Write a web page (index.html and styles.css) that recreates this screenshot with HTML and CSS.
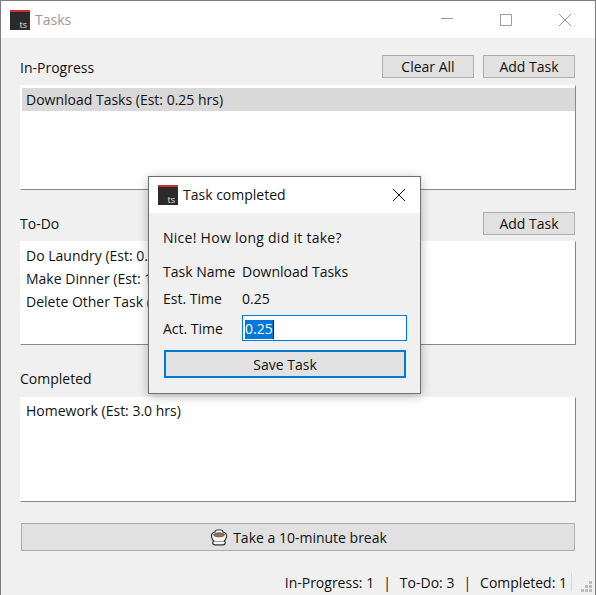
FILE: index.html
```html
<!DOCTYPE html>
<html>
<head>
    <title>Tasks</title>
    <link rel="stylesheet" href="styles.css">
</head>
<body>
    <div class="window">
        <div class="titlebar">
            <div class="app-icon"><span>ts</span></div>
            <div class="window-title">Tasks</div>
            <div class="caption">
                <svg width="14" height="14" viewBox="0 0 14 14"><path d="M1 5.5H13" stroke="#9a9a9a" fill="none"/></svg>
                <svg width="14" height="14" viewBox="0 0 14 14"><path d="M1.5 1.5H12.5V12.5H1.5Z" stroke="#9a9a9a" fill="none"/></svg>
                <svg width="14" height="14" viewBox="0 0 14 14"><path d="M1 1L13 13M13 1L1 13" stroke="#9a9a9a" fill="none"/></svg>
            </div>
        </div>

        <div class="content">
            <div class="section-head head-progress">
                <span class="section-label">In-Progress</span>
                <button class="btn">Clear All</button>
                <button class="btn">Add Task</button>
            </div>
            <div class="list list-progress">
                <div class="row row-selected">Download Tasks (Est: 0.25 hrs)</div>
            </div>

            <div class="section-head head-todo">
                <span class="section-label">To-Do</span>
                <button class="btn">Add Task</button>
            </div>
            <div class="list list-todo">
                <div class="row">Do Laundry (Est: 0.5 hrs)</div>
                <div class="row">Make Dinner (Est: 1.0 hrs)</div>
                <div class="row">Delete Other Task (Est: 0.1 hrs)</div>
            </div>

            <div class="section-head head-done">
                <span class="section-label">Completed</span>
            </div>
            <div class="list list-done">
                <div class="row">Homework (Est: 3.0 hrs)</div>
            </div>

            <button class="break-btn">
                <svg width="20" height="18" viewBox="0 0 20 18">
                    <path d="M6 4C6 1 14 1 14 4C16 4.5 18 6 17.5 9C17 11.5 16 12.5 15 13.2C17.5 14 16.5 16.8 14 16.8H6C3.5 16.8 2.5 14 5 13.2C4 12.5 3 11.5 2.5 9C2 6 4 4.5 6 4Z" fill="#f6f6f4" stroke="#333" stroke-width="1.2"/>
                    <path d="M7.5 2.8C9 2 11 2 12.5 2.8" stroke="#aaa" fill="none"/>
                    <ellipse cx="10" cy="6.8" rx="5.5" ry="2" fill="#8f6f58" stroke="#5a4a40" stroke-width="0.7"/>
                    <path d="M5 13.5H15" stroke="#999"/>
                </svg>
                <span>Take a 10-minute break</span>
            </button>
        </div>

        <div class="statusbar">
            <span>In-Progress: 1</span><span class="pipe">|</span><span>To-Do: 3</span><span class="pipe">|</span><span>Completed: 1</span>
            <div class="status-sep"></div>
            <svg class="grip" width="12" height="12" viewBox="0 0 12 12" fill="#bdbdbd">
                <rect x="8" y="0" width="3" height="3"/>
                <rect x="4" y="4" width="3" height="3"/><rect x="8" y="4" width="3" height="3"/>
                <rect x="0" y="8" width="3" height="3"/><rect x="4" y="8" width="3" height="3"/><rect x="8" y="8" width="3" height="3"/>
            </svg>
        </div>
    </div>

    <!-- modal sits on top of the main window -->
    <div class="dialog">
        <div class="dialog-titlebar">
            <div class="app-icon"><span>ts</span></div>
            <div class="dialog-title">Task completed</div>
            <svg class="dialog-close" width="14" height="14" viewBox="0 0 14 14"><path d="M1 1L13 13M13 1L1 13" stroke="#111" fill="none"/></svg>
        </div>
        <div class="dialog-body">
            <div class="prompt">Nice! How long did it take?</div>
            <div class="field field-name"><span class="field-label">Task Name</span><span>Download Tasks</span></div>
            <div class="field field-est"><span class="field-label">Est. Time</span><span>0.25</span></div>
            <div class="field field-act">
                <span class="field-label">Act. Time</span>
                <div class="time-input"><span class="selected-text">0.25</span></div>
            </div>
            <button class="save-btn">Save Task</button>
        </div>
    </div>
</body>
</html>
```

FILE: styles.css
```css
* {
    box-sizing: border-box;
}

html, body {
    margin: 0;
    height: 100%;
    overflow: hidden;
}

body {
    font-family: "Open Sans", "Noto Sans", sans-serif;
    font-size: 14px;
    color: #111;
    background-color: #f0f0f0;
}

button {
    font: inherit;
    color: inherit;
    padding: 0;
}

.window {
    width: 596px;
    height: 595px;
    border: 1px solid #7c7c7c;
    border-bottom: none;
    display: flex;
    flex-direction: column;
}

.titlebar {
    height: 37px;
    flex: none;
    background-color: #fff;
    display: flex;
    align-items: center;
    padding-left: 9px;
}

.app-icon {
    width: 20px;
    height: 20px;
    flex: none;
    background-color: #2b2b2b;
    border-top: 2px solid #c8322b;
    display: flex;
    align-items: flex-end;
    justify-content: flex-end;
    padding-right: 3px;
}

.app-icon span {
    font-size: 9px;
    line-height: 10px;
    color: #e6e6e6;
}

.window-title {
    margin-left: 5px;
    color: #9b9b9b;
    font-size: 14px;
}

.caption {
    margin-left: auto;
    display: flex;
    gap: 45px;
    padding-right: 23px;
}

.content {
    flex: 1;
    padding: 0 19px;
    display: flex;
    flex-direction: column;
}

.section-head {
    height: 23px;
    flex: none;
    display: flex;
    align-items: center;
    gap: 9px;
    padding-right: 1px;
}

.head-progress {
    margin-top: 17px;
    margin-bottom: 7px;
}

.head-todo {
    margin-top: 22px;
    margin-bottom: 6px;
}

.head-done {
    margin-top: 23px;
    margin-bottom: 6px;
}

.section-label {
    margin-right: auto;
}

.head-progress .section-label {
    padding-top: 2px;
}

.head-done .section-label {
    padding-bottom: 2px;
}

.btn {
    width: 92px;
    height: 23px;
    background-color: #e1e1e1;
    border: 1px solid #adadad;
}

.list {
    flex: none;
    background-color: #fff;
    border: 1px solid;
    border-color: #fff #828790 #828790 #fff;
    padding: 2px 0 0 1px;
}

.list-progress {
    height: 105px;
}

.list-todo {
    height: 104px;
    padding-top: 3px;
}

.list-done {
    height: 105px;
}

.row {
    height: 23px;
    line-height: 22px;
    padding-left: 4px;
    white-space: nowrap;
    overflow: hidden;
}

.row-selected {
    background-color: #d9d9d9;
    line-height: 24px;
}

.break-btn {
    flex: none;
    height: 28px;
    width: 554px;
    margin: 21px 0 0 1px;
    background-color: #e1e1e1;
    border: 1px solid #adadad;
    display: flex;
    align-items: center;
    justify-content: center;
    gap: 4px;
}

.statusbar {
    flex: none;
    height: 24px;
    display: flex;
    align-items: center;
    justify-content: flex-end;
    padding-right: 2px;
    padding-bottom: 2px;
    position: relative;
}

.pipe {
    margin: 0 9px;
}

.status-sep {
    width: 1px;
    height: 18px;
    margin-left: 4px;
    margin-right: 21px;
    background-color: #d9d9d9;
}

.grip {
    position: absolute;
    right: 2px;
    bottom: 2px;
}

.dialog {
    position: absolute;
    left: 148px;
    top: 176px;
    width: 273px;
    height: 218px;
    background-color: #f0f0f0;
    border: 1px solid #6f6f6f;
    box-shadow: 0 2px 10px rgba(0, 0, 0, 0.28);
}

.dialog-titlebar {
    height: 36px;
    background-color: #fff;
    display: flex;
    align-items: center;
    padding-left: 9px;
}

.dialog-title {
    margin-left: 5px;
    padding-bottom: 2px;
}

.dialog-close {
    margin-left: auto;
    margin-right: 14px;
}

.dialog-body {
    padding: 0 14px;
}

.prompt {
    height: 24px;
    line-height: 24px;
    margin-top: 13px;
    letter-spacing: 0.27px;
}

.field {
    display: flex;
    align-items: center;
    height: 24px;
}

.field-name {
    margin-top: 9px;
}

.field-est {
    margin-top: 3px;
}

.field-act {
    margin-top: 5px;
    height: 26px;
}

.field-label {
    width: 79px;
    flex: none;
}

.time-input {
    width: 165px;
    height: 26px;
    margin-right: -1px;
    background-color: #fff;
    border: 1px solid #0078d7;
    padding: 3px 0 0 2px;
}

.selected-text {
    display: inline-block;
    height: 19px;
    line-height: 18px;
    background-color: #0078d7;
    color: #fff;
    border-right: 1px solid #000;
}

.save-btn {
    display: block;
    width: 242px;
    height: 28px;
    margin: 9px 0 0 1px;
    background-color: #e1e1e1;
    border: 2px solid #0078d7;
}
```
